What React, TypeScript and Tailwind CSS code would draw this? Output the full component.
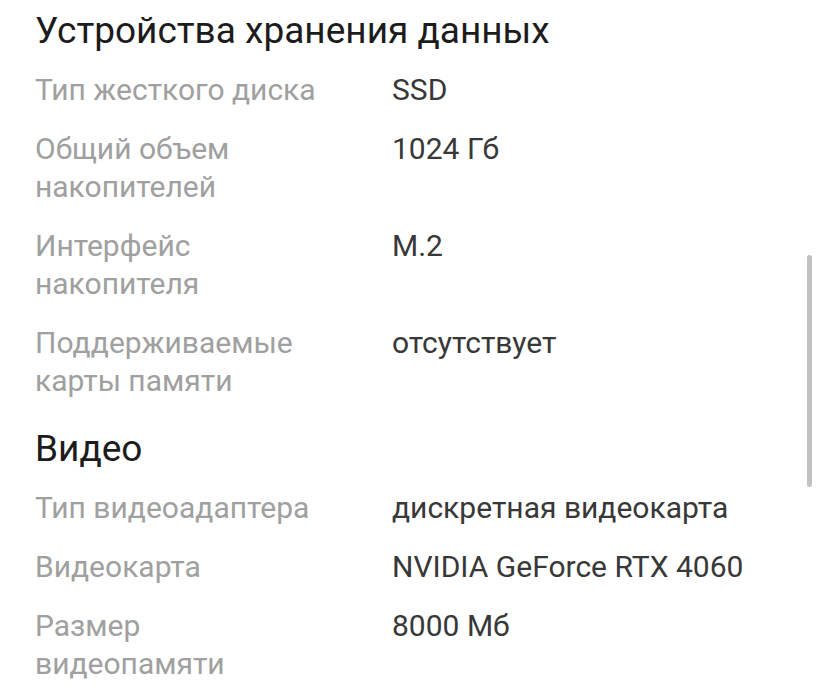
const sections = [
  {
    title: "Устройства хранения данных",
    rows: [
      { label: "Тип жесткого диска", value: "SSD" },
      { label: "Общий объем накопителей", value: "1024 Гб" },
      { label: "Интерфейс накопителя", value: "M.2" },
      { label: "Поддерживаемые карты памяти", value: "отсутствует" },
    ],
  },
  {
    title: "Видео",
    rows: [
      { label: "Тип видеоадаптера", value: "дискретная видеокарта" },
      { label: "Видеокарта", value: "NVIDIA GeForce RTX 4060" },
      { label: "Размер видеопамяти", value: "8000 Мб" },
    ],
  },
];

const App = () => {
  return (
    <div className="relative w-[819px] h-[699px] overflow-hidden bg-white font-['Roboto',sans-serif]">
      <div className="pl-[35px] pt-[11px] flex flex-col">
        {sections.map((section, i) => (
          <section key={i} className={i > 0 ? "mt-[29px]" : ""}>
            {/* Section title */}
            <h2 className="text-[37px] leading-[40px] text-[#1c1c1c] font-normal">
              {section.title}
            </h2>
            <div className="flex flex-col gap-[21px] mt-[20px]">
              {section.rows.map((row, j) => (
                <div key={j} className="grid grid-cols-[357px_1fr] text-[30px] leading-[38px]">
                  <div className="text-[#a0a0a0] w-[300px]">{row.label}</div>
                  <div className="text-[#383838]">{row.value}</div>
                </div>
              ))}
            </div>
          </section>
        ))}
      </div>
      {/* scrollbar */}
      <div className="absolute left-[807px] top-[255px] w-[5px] h-[232px] rounded-full bg-[#c2c2c2]" />
    </div>
  );
};

export default App;
